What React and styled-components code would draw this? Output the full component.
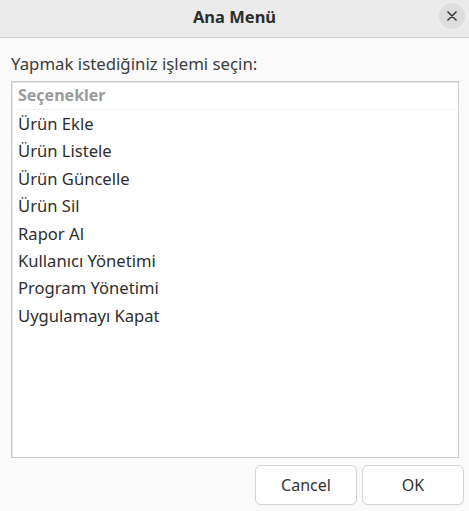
import React from 'react';
import styled, { createGlobalStyle } from 'styled-components';

const GlobalStyle = createGlobalStyle`
  html, body {
    margin: 0;
    padding: 0;
    background: #fafafa;
  }
  body {
    font-family: "Noto Sans", "Open Sans", sans-serif;
    color: #3d3d3d;
  }
`;

const Window = styled.div`
  width: 469px;
  height: 511px;
  display: flex;
  flex-direction: column;
  background: #fafafa;
  overflow: hidden;
`;

const TitleBar = styled.div`
  height: 37px;
  flex-shrink: 0;
  display: grid;
  grid-template-columns: 40px 1fr 40px;
  align-items: center;
  background: #ebebeb;
  border-bottom: 1px solid #cfcfcf;
`;

const Title = styled.div`
  grid-column: 2;
  text-align: center;
  font-weight: bold;
  font-size: 16.5px;
  color: #2e2e2e;
  margin-top: -5px;
`;

const CloseButton = styled.button`
  width: 26px;
  height: 26px;
  border-radius: 50%;
  border: none;
  background: #dddddd;
  padding: 0;
  display: flex;
  align-items: center;
  justify-content: center;
  justify-self: end;
  margin-right: 4px;
  margin-top: -6px;
  color: #3a3a3a;
`;

const Body = styled.div`
  flex: 1;
  display: flex;
  flex-direction: column;
  padding: 13px 5px 6px 11px;
`;

const Prompt = styled.div`
  font-size: 16.8px;
  color: #3d3d3d;
  height: 30px;
  line-height: 26px;
`;

const ListBox = styled.div`
  flex: 1;
  margin-right: 5px;
  background: #ffffff;
  border: 1px solid #cdcdcd;
  box-shadow: inset 1px 1px 0 #e2e2e2;
  display: flex;
  flex-direction: column;
`;

const Header = styled.div`
  height: 27px;
  line-height: 27px;
  padding-left: 6px;
  font-weight: bold;
  font-size: 16px;
  color: #9a9a9a;
  border-bottom: 1px solid #f3f3f3;
`;

const Item = styled.div`
  height: 27.4px;
  line-height: 27.4px;
  padding-left: 6px;
  font-size: 16.6px;
  color: #2e2e2e;
`;

const Footer = styled.div`
  display: flex;
  justify-content: flex-end;
  gap: 5px;
  padding-top: 7px;
`;

const Button = styled.button`
  width: 102px;
  height: 40px;
  border: 1px solid #d4d4d4;
  border-radius: 6px;
  background: #ffffff;
  font-family: "Noto Sans", "Open Sans", sans-serif;
  font-size: 16px;
  color: #333333;
  box-shadow: 0 1px 1px rgba(0, 0, 0, 0.04);
  cursor: pointer;
`;

const options = [
  'Ürün Ekle',
  'Ürün Listele',
  'Ürün Güncelle',
  'Ürün Sil',
  'Rapor Al',
  'Kullanıcı Yönetimi',
  'Program Yönetimi',
  'Uygulamayı Kapat'
];

const App = () => {
  return (
    <Window>
      <GlobalStyle />
      <TitleBar>
        <Title>Ana Menü</Title>
        <CloseButton aria-label="Kapat">
          <svg width="10" height="10" viewBox="0 0 10 10">
            <path d="M1 1 L9 9 M9 1 L1 9" stroke="currentColor" strokeWidth="1.6" strokeLinecap="round" />
          </svg>
        </CloseButton>
      </TitleBar>
      <Body>
        <Prompt>Yapmak istediğiniz işlemi seçin:</Prompt>
        <ListBox>
          <Header>Seçenekler</Header>
          {options.map(opt => (
            <Item key={opt}>{opt}</Item>
          ))}
        </ListBox>
        <Footer>
          <Button>Cancel</Button>
          <Button>OK</Button>
        </Footer>
      </Body>
    </Window>
  );
};

export default App;
